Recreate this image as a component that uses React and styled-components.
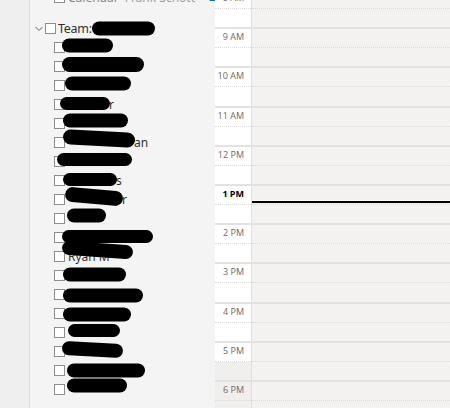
import React from 'react';
import styled, { createGlobalStyle } from 'styled-components';

const GlobalStyle = createGlobalStyle`
  html, body {
    margin: 0;
    padding: 0;
    background: #f3f3f3;
    font-family: "Noto Sans", "Open Sans", sans-serif;
  }
`;

const Page = styled.div`
  display: flex;
  width: 450px;
  height: 408px;
  overflow: hidden;
`;

const Gutter = styled.div`
  width: 29px;
  background: #efefef;
  border-right: 1px solid #dedede;
  flex-shrink: 0;
`;

const Nav = styled.div`
  width: 185px;
  background: #f4f4f4;
  flex-shrink: 0;
`;

const List = styled.div`
  margin-top: -12px;
  display: flex;
  flex-direction: column;
`;

const Row = styled.div`
  position: relative;
  display: flex;
  align-items: center;
  height: 19px;
  padding-left: ${(p) => (p.$team ? '5px' : '24px')};
  margin-bottom: ${(p) => p.$gap || 0}px;
  font-size: 12px;
  color: #323130;
  white-space: nowrap;
`;

const Chevron = styled.svg`
  width: 8px;
  height: 6px;
  margin-right: 2px;
`;

const Box = styled.span`
  box-sizing: border-box;
  width: 11px;
  height: 11px;
  border: 1px solid #8f8d8b;
  background: #fff;
  flex-shrink: 0;
`;

const Label = styled.span`
  margin-left: ${(p) => (p.$team ? '2px' : '3px')};
  font-size: ${(p) => (p.$team ? '12.5px' : '12px')};
  letter-spacing: ${(p) => (p.$team ? '-0.3px' : '0')};
  color: ${(p) => (p.$muted ? '#8a8886' : '#323130')};
`;

const Muted = styled.span`
  color: #a19f9d;
  margin-left: 6px;
`;

const Share = styled.span`
  margin-left: 14px;
  color: #0f6cbd;
  font-size: 11px;
`;

const Redacted = styled.span`
  display: inline-block;
  flex-shrink: 0;
  background: #000;
  border-radius: 8px;
`;

const Tail = styled.span`
  margin-left: -1px;
  color: #323130;
`;

const Cover = styled.span`
  position: absolute;
  background: #000;
  border-radius: 8px;
`;

const Calendar = styled.div`
  flex: 1;
  background: #f3f2f1;
  display: flex;
  flex-direction: column;
`;

const Grid = styled.div`
  margin-top: -12px;
  display: flex;
  flex-direction: column;
`;

const Hour = styled.div`
  position: relative;
  box-sizing: border-box;
  height: 39.2px;
  border-top: 2px solid #e4e2e0;
  display: flex;
  flex-shrink: 0;
`;

const TimeCell = styled.div`
  width: 36px;
  border-right: 1px solid #e1dfdd;
  display: flex;
  flex-direction: column;
  flex-shrink: 0;
`;

const DayCell = styled.div`
  flex: 1;
  display: flex;
  flex-direction: column;
`;

const Half = styled.div`
  flex: 1;
  background: ${(p) => (p.$off ? '#f0efee' : p.$white ? '#ffffff' : 'transparent')};
  border-bottom: ${(p) => (p.$first ? '1px dotted #dcdad8' : 'none')};
  display: flex;
  justify-content: flex-end;
  align-items: flex-start;
`;

const TimeLabel = styled.span`
  font-family: "Open Sans", "Noto Sans", sans-serif;
  font-size: 9px;
  line-height: 12px;
  margin-top: 2px;
  padding-right: 7px;
  color: ${(p) => (p.$now ? '#000' : '#6b6967')};
  font-weight: ${(p) => (p.$now ? 700 : 400)};
`;

const NowLine = styled.div`
  position: absolute;
  left: 37px;
  right: 0;
  top: 14px;
  height: 2px;
  background: #000;
  border-top: 1px solid #fff;
`;

// x: left edge of the scribble inside the nav pane, t/h: its top and height inside the 19px row
const members = [
  { x: 32, w: 51, t: 0, h: 14 },
  { x: 32, w: 82, t: 0, h: 15 },
  { x: 35, w: 66, t: 0, h: 14 },
  { x: 30, w: 50, t: 2, h: 13, tail: 'r' },
  { x: 33, w: 65, t: -1, h: 14 },
  { x: 33, w: 72, t: -2, h: 15, r: 3, tail: 'an' },
  { x: 27, w: 75, t: 1, h: 13 },
  { x: 33, w: 54, t: 2, h: 13, tail: 's' },
  { x: 35, w: 58, t: -1, h: 15, r: 5, tail: 'r' },
  { x: 37, w: 39, t: -1, h: 14 },
  { x: 32, w: 91, t: 2, h: 13 },
  { x: 32, w: 71, t: -4, h: 14, r: 4, name: 'Ryan M' },
  { x: 33, w: 63, t: 1, h: 14 },
  { x: 33, w: 80, t: 3, h: 14 },
  { x: 33, w: 68, t: 3, h: 14 },
  { x: 38, w: 52, t: 1, h: 13 },
  { x: 32, w: 61, t: 0, h: 14, r: 3 },
  { x: 37, w: 78, t: 2, h: 14 },
  { x: 37, w: 60, t: -2, h: 14 },
];

const hours = ['8 AM', '9 AM', '10 AM', '11 AM', '12 PM', '1 PM', '2 PM', '3 PM', '4 PM', '5 PM', '6 PM'];

const pillStyle = (m) => ({
  width: m.w,
  height: m.h,
  marginLeft: m.x - 35,
  transform: `translateY(${m.t + m.h / 2 - 9.5}px)${m.r ? ` rotate(${m.r}deg)` : ''}`,
});

const App = () => (
  <>
    <GlobalStyle />
    <Page>
      <Gutter />
      <Nav>
        <List>
          <Row $gap={12}>
            <Box />
            <Label $muted>Calendar</Label>
            <Muted>Frank Schott</Muted>
            <Share>⇆</Share>
          </Row>
          <Row $team>
            <Chevron viewBox="0 0 8 6">
              <polyline points="0.5,1 4,4.5 7.5,1" fill="none" stroke="#605e5c" strokeWidth="1" />
            </Chevron>
            <Box />
            <Label $team>Team:</Label>
            <Redacted style={{ width: 63, height: 14, transform: 'translateY(-0.5px)' }} />
          </Row>
          {members.map((m, i) =>
            m.name ? (
              <Row key={i}>
                <Box />
                <Label>{m.name}</Label>
                <Cover
                  style={{
                    left: m.x,
                    width: m.w,
                    top: m.t,
                    height: m.h,
                    transform: `rotate(${m.r}deg)`,
                  }}
                />
              </Row>
            ) : (
              <Row key={i}>
                <Box />
                <Redacted style={pillStyle(m)} />
                {m.tail && <Tail>{m.tail}</Tail>}
              </Row>
            )
          )}
        </List>
      </Nav>
      <Calendar>
        <Grid>
          {hours.map((h, i) => (
            <Hour key={h}>
              <TimeCell>
                <Half $first $white={i < 10} $off={i >= 10}>
                  <TimeLabel $now={h === '1 PM'}>{h}</TimeLabel>
                </Half>
                <Half $white={i < 9} $off={i >= 9} />
              </TimeCell>
              <DayCell>
                <Half $first />
                <Half />
              </DayCell>
              {h === '1 PM' && <NowLine />}
            </Hour>
          ))}
        </Grid>
      </Calendar>
    </Page>
  </>
);

export default App;
